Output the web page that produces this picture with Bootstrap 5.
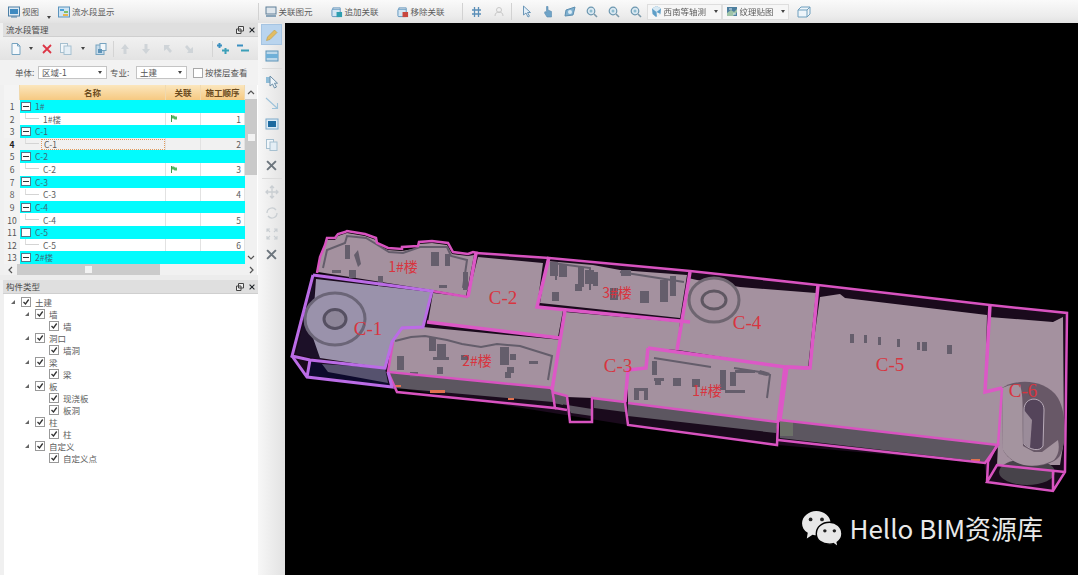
<!DOCTYPE html>
<html lang="zh-CN">
<head>
  <meta charset="UTF-8" />
  <title>流水段管理</title>
  <link href="https://cdn.jsdelivr.net/npm/bootstrap@5.3.3/dist/css/bootstrap.min.css" rel="stylesheet" />
  <style>
    html, body { height: 100%; overflow: hidden; background: #fff; }
    body { font: 8.5px/1 "Noto Sans CJK SC", "Liberation Sans", sans-serif; color: #5c5c5c; }
    .app-shell { width: 1078px; height: 575px; filter: blur(.45px); }

    /* top bar */
    .top-bar { height: 23px; flex: none; background: linear-gradient(#fafafa, #ececec 70%, #e2e2e2); }
    .top-bar svg { flex: none; }
    .tb-text { margin-left: 2px; white-space: nowrap; }
    .tb-sep { width: 1px; height: 17px; background: #d2d2d2; flex: none; }
    .tb-combo { height: 16px; background: #f6f6f6; border: 1px solid #dedede; padding: 0 3px; position: relative; }
    .combo-a { width: 75px; }
    .combo-b { width: 67px; }
    .combo-arrow { width: 0; height: 0; border: 2.5px solid transparent; border-top: 3px solid #444; border-bottom: 0; flex: none; }
    .ml5 { margin-left: 5px; } .ml6 { margin-left: 6px; } .ml7 { margin-left: 7px; } .ml8 { margin-left: 8px; }
    .ml9 { margin-left: 9px; } .ml10 { margin-left: 10px; } .ml11 { margin-left: 11px; } .ml12 { margin-left: 12px; }
    .ml17 { margin-left: 17px; } .ml18 { margin-left: 18px; } .ml143 { margin-left: 143px; }
    .arrow-mini { align-self: flex-end; margin-bottom: 4px; }

    /* left panels */
    .left-pane { width: 258px; flex: none; background: #f0f0f0; padding-left: 4px; }
    .pane-title { height: 14px; flex: none; background: #dfdfdf; border-bottom: 1px solid #cfcfcf; padding: 0 3px 0 3px; margin-left: -1px; color: #4a4a4a; }
    .pane-btns { gap: 5px; color: #444; }
    .pane-tools { height: 23px; flex: none; background: linear-gradient(#f1f1f1, #e3e3e3); margin-left: -4px; padding-left: 7px; }
    .slot { display: flex; justify-content: center; align-items: center; flex: none; }
    .s12 { width: 12px; } .s14 { width: 14px; } .s18 { width: 18px; } .s19 { width: 19px; } .s20 { width: 20px; } .s22 { width: 22px; }
    .pane-sep { width: 1px; height: 16px; background: #d4d4d4; margin: 0 1px; flex: none; }
    .filter-row { height: 25px; flex: none; color: #555; margin-left: -4px; background: #f2f2f2; }
    .filter-label { margin-left: 15px; width: 23px; }
    .filter-label-b { margin-left: 3px; width: 26px; }
    .fake-select { height: 13px; background: #fff; border: 1px solid #c4c4c4; padding: 0 4px 0 3px; }
    .sel-a { width: 69px; }
    .sel-b { width: 51px; }
    .check-wrap { margin-left: 6px; gap: 2px; }
    .plain-box { width: 10px; height: 10px; background: #fff; border: 1px solid #a8a8a8; }

    /* grid */
    .grid-box { height: 190px; flex: none; background: #fff; overflow: hidden; }
    .grid-main { width: 241px; height: 179px; flex: none; overflow: hidden; }
    .flow-table { table-layout: fixed; width: 241px; border-collapse: separate; border-spacing: 0; margin: 0; color: #5c5c5c; }
    .flow-table th, .flow-table td { padding: 0; border: 0; font-weight: 400; white-space: nowrap; box-shadow: none; vertical-align: middle; }
    .flow-table thead th { height: 15px; text-align: center; color: #6a4a1c; font-weight: 700; background: linear-gradient(#fbe6bd, #f6c981); border-right: 1px solid #f0d9ae; }
    .flow-table thead th:first-child { background: #f4f4f4; }
    .flow-table tbody td { height: 12.62px; border-right: 1px solid #e2e2e2; background: #fff; }
    .flow-table tbody td:first-child { background: #f3f3f3; text-align: center; color: #555; border-right: 0; }
    .flow-table tr.grp td:not(:first-child) { background: #02fbfd; border-color: #02fbfd; color: #3d6a78; }
    .flow-table tr.picked td { background: #f1f1f1; }
    .flow-table tr.picked td:first-child { font-weight: 700; color: #222; }
    .flow-table tr.picked .picked-name { border: 1px dotted #e09a5c; }
    .num-cell { text-align: right; padding-right: 3px !important; }
    .col-no { width: 16px; } .col-name { width: 146px; } .col-rel { width: 35px; } .col-order { width: 44px; }
    .name-cell { height: 11px; }
    .exp-box { width: 10px; height: 9px; margin: 0 4px 0 1px; background: #fff; border: 1px solid #54788c; flex: none; position: relative; }
    .exp-box.minus::after { content: ""; position: absolute; left: 1px; right: 1px; top: 3px; height: 1px; background: #333; }
    .tree-line { width: 14px; height: 6px; margin: 0 4px 6px 5px; border-left: 1px solid #ddd; border-bottom: 1px solid #d4d4d4; flex: none; }
    .picked-name { height: 11px; width: 126px; padding-left: 2px; margin-left: -2px; }
    .flag { margin-left: 5px; display: block; }

    .v-scroll { width: 12px; height: 179px; flex: none; background: #f1f1f1; }
    .v-arrow { height: 14px; flex: none; color: #555; }
    .v-track { height: 76px; flex: none; background: #c9c9c9; }
    .v-grip { width: 7px; height: 7px; background: #f2f2f2; }
    .h-scroll { height: 11px; flex: none; background: #f1f1f1; width: 253px; }
    .h-track { width: 143px; height: 100%; background: #cbcbcb; margin-left: 1px; }
    .h-grip { width: 7px; height: 7px; background: #f2f2f2; }
    .h-arrow { width: 12px; flex: none; }
    .pane-gap { height: 5px; flex: none; background: #ececec; margin-left: -4px; }

    /* tree */
    .type-tree { background: #fff; padding: 2px 0 0 0; margin: 0; list-style: none; flex-grow: 1; }
    .type-tree li { height: 12px; color: #5c5c5c; white-space: nowrap; }
    .caret { width: 0; height: 0; border-bottom: 4px solid #666; border-left: 4px solid transparent; flex: none; margin-right: 6px; }
    .chk { width: 10px; height: 10px; border: 1px solid #999; background: #fff; flex: none; margin-right: 4px; }
    .lvl0 { padding-left: 7px; } .lvl1 { padding-left: 21px; } .lvl2 { padding-left: 45px; }

    /* side rail */
    .tool-rail { width: 27px; flex: none; background: linear-gradient(90deg, #f7f7f7, #e2e2e2); padding-top: 1px; }
    .rail-btn { width: 21px; height: 21px; flex: none; }
    .rail-btn.on { background: #b9d4ee; border: 1px solid #a5c4e2; }
    .rail-sep { width: 20px; height: 1px; background: #dcdcdc; margin: 2px 0; flex: none; }

    /* model view */
    .view-port { background: #000; overflow: hidden; position: relative; }
    .view-port > svg { display: block; }
    .lbl { font-family: "Liberation Serif", "Noto Sans CJK SC", serif; font-size: 19px; fill: #d8353f; text-anchor: middle; }
    .lbl-cn { font-family: "Noto Sans CJK SC", serif; font-size: 14px; }
    .wm-mark { right: 35px; bottom: 28px; color: #e9e9e9; font-size: 26px; line-height: 1; gap: 7px; font-family: "Noto Sans CJK SC", "Noto Sans", sans-serif; white-space: nowrap; }
  </style>
</head>
<body>

<svg width="0" height="0" class="position-absolute">
  <symbol id="ic-view" viewBox="0 0 12 12"><rect x=".5" y="1" width="11" height="9" fill="#dfeaf3" stroke="#4d7fa5"/><rect x="2" y="3" width="8" height="5" fill="#3f8ac0"/><path d="M3 11h6" stroke="#4d7fa5"/></symbol>
  <symbol id="ic-flow" viewBox="0 0 12 12"><rect x=".5" y="1" width="11" height="10" fill="#cfe4f3" stroke="#5b93bd"/><rect x="2" y="3" width="4" height="2" fill="#4aa0d8"/><rect x="6" y="5" width="4" height="2" fill="#7cc06a"/><rect x="5" y="8" width="5" height="2" fill="#e9b64e"/></symbol>
  <symbol id="ic-rel" viewBox="0 0 12 12"><rect x="1" y="1" width="10" height="7" fill="#dfe6ec" stroke="#5f7f98"/><rect x="1" y="9" width="10" height="2" fill="#88a3b8"/></symbol>
  <symbol id="ic-add" viewBox="0 0 13 12"><path d="M2 4V1.500h8V4" fill="none" stroke="#6a9bc0"/><rect x="1" y="3" width="9" height="8" rx="1" fill="#d4e6f3" stroke="#5b93bd"/><rect x="6" y="6" width="6" height="5.500" fill="#2f9fb0"/></symbol>
  <symbol id="ic-del" viewBox="0 0 13 12"><path d="M2 4V1.500h8V4" fill="none" stroke="#6a9bc0"/><rect x="1" y="3" width="9" height="8" rx="1" fill="#d4e6f3" stroke="#5b93bd"/><rect x="6" y="6" width="6" height="5.500" fill="#c8473f"/></symbol>
  <symbol id="ic-hash" viewBox="0 0 11 12"><path d="M3.500 1v10M7.500 1v10M1 4h9M1 8h9" stroke="#5b8fb8" stroke-width="1.300" fill="none"/></symbol>
  <symbol id="ic-person" viewBox="0 0 11 12"><circle cx="5" cy="4" r="2.500" fill="none" stroke="#c8c8c8"/><path d="M1 10c0-3 2-4 4-4s4 1 4 4" fill="none" stroke="#c8c8c8"/></symbol>
  <symbol id="ic-cursor" viewBox="0 0 10 13"><path d="M1.500 1v9l2.500-2 2 4 1.500-.8-2-3.700H8.500z" fill="#e4eff8" stroke="#6c97b8"/></symbol>
  <symbol id="ic-hand" viewBox="0 0 10 13"><path d="M3.500 1.500v6L2 6.500 1.500 8 4 12h4.500V6.500L5 5V1.500z" fill="#6fa4c8" stroke="#5a8cb0" stroke-width=".6"/></symbol>
  <symbol id="ic-orbit" viewBox="0 0 14 12"><path d="M2 10l1-6 9-3-2 8z" fill="#7fb0d0" stroke="#5e8fb0"/><circle cx="7" cy="6" r="2" fill="#dcecf6"/></symbol>
  <symbol id="ic-zoom" viewBox="0 0 12 12"><circle cx="5" cy="5" r="3.800" fill="#dbe9f2" stroke="#6c97b0" stroke-width="1.200"/><path d="M8 8l3 3" stroke="#7d9aab" stroke-width="1.600"/><circle cx="5" cy="5" r="1.500" fill="#8ebdd0"/></symbol>
  <symbol id="ic-iso" viewBox="0 0 11 13"><path d="M5.500 1L10 3.500 9.500 9 5 12 1.500 9 1 3.500z" fill="#5f9fc8"/><path d="M5.500 1L10 3.500 5.500 7 1 3.500z" fill="#d8e9f3"/><path d="M5.500 7L6 12 9.500 9z" fill="#f2f2f2"/></symbol>
  <symbol id="ic-tex" viewBox="0 0 12 12"><rect x="1" y="1" width="10" height="9" fill="#4d7f9f"/><path d="M1 7l4-3 3 2 3-3v3l-4 4H1z" fill="#9fc4a8"/><path d="M3 3h3M7 8h3" stroke="#d8e8f2"/></symbol>
  <symbol id="ic-cube" viewBox="0 0 14 12"><path d="M1 4h9v7H1zM1 4l3-3h9l-3 3M10 11l3-3V1" fill="#eef5fa" stroke="#6f9fbe"/></symbol>
  <symbol id="ic-new" viewBox="0 0 10 12"><path d="M1 .5h5.500L9 3v8.500H1z" fill="#f4f8fb" stroke="#76a3c0"/><path d="M6.500.5V3H9" fill="none" stroke="#76a3c0"/></symbol>
  <symbol id="ic-x" viewBox="0 0 10 10"><path d="M1 1l8 8M9 1l-8 8" stroke="currentColor" stroke-width="1.800"/></symbol>
  <symbol id="ic-copy" viewBox="0 0 12 12"><rect x=".5" y=".5" width="7" height="9" fill="#f2f7fa" stroke="#a6c0d0"/><rect x="4" y="3" width="7" height="8.500" fill="#e4eef5" stroke="#a6c0d0"/></symbol>
  <symbol id="ic-paste" viewBox="0 0 12 12"><rect x="1" y="2" width="8" height="9.500" fill="#c6dbea" stroke="#76a3c0"/><rect x="5" y=".5" width="6" height="7" fill="#f2f7fa" stroke="#76a3c0"/><rect x="3" y="6" width="4" height="4" fill="#5e93b8"/></symbol>
  <symbol id="ic-up" viewBox="0 0 10 12"><path d="M5 1l4 5H6.500v5h-3V6H1z" fill="#cfd4d8"/></symbol>
  <symbol id="ic-down" viewBox="0 0 10 12"><path d="M5 11L1 6h2.500V1h3v5H9z" fill="#cfd4d8"/></symbol>
  <symbol id="ic-ul" viewBox="0 0 10 10"><path d="M1 1h6L5.500 3 9 7 7 9 3.500 5 1 7z" fill="#cfd4d8"/></symbol>
  <symbol id="ic-dr" viewBox="0 0 10 10"><path d="M9 9H3l1.500-2L1 3l2-2 3.500 4L9 3z" fill="#cfd4d8"/></symbol>
  <symbol id="ic-plus" viewBox="0 0 12 11"><path d="M0 2.500h5M2.500 0v5" stroke="#3b8fc0" stroke-width="2"/><path d="M5 7.500h7M8.500 5v6" stroke="#3b9fb8" stroke-width="2"/></symbol>
  <symbol id="ic-minus" viewBox="0 0 12 11"><path d="M0 2.500h6" stroke="#3b8fc0" stroke-width="2"/><path d="M4 7.500h8" stroke="#3b9fb8" stroke-width="2"/></symbol>
  <symbol id="ic-flag" viewBox="0 0 6 7"><path d="M.5 0v7" stroke="#3d9a4a"/><path d="M1 .5h2l1 1h2v3H3.500l-1-1H1z" fill="#55b562"/></symbol>
  <symbol id="ic-check" viewBox="0 0 8 8"><path d="M1.500 4l2 2 3.200-4.500" fill="none" stroke="#333" stroke-width="1.300"/></symbol>
  <symbol id="ic-float" viewBox="0 0 8 8"><path d="M2.500 .5h5v4.500h-5zM.5 3h4.500v4.500H.5z" fill="#eee" stroke="#444"/></symbol>
  <symbol id="ic-pencil" viewBox="0 0 14 14"><path d="M1.500 12.500l1-3.500 7-7 2.500 2.500-7 7z" fill="#e3bd62" stroke="#b99a4e" stroke-width=".6"/></symbol>
  <symbol id="ic-box" viewBox="0 0 14 14"><rect x="1" y="2" width="12" height="10" fill="#bcd8ea" stroke="#5c93b8"/><rect x="1" y="5" width="12" height="4" fill="#6fb0d8"/></symbol>
  <symbol id="ic-arrowsel" viewBox="0 0 14 14"><path d="M1 2h5v6H1z" fill="#8fbdd8"/><path d="M5 1l0 10 2.500-2 2 4 2-1-2-3.800H12.500z" fill="#eef5fa" stroke="#6c8fa8"/></symbol>
  <symbol id="ic-line" viewBox="0 0 14 14"><path d="M1 2l11 10M12.500 7v5.500H7" fill="none" stroke="#9ec3da" stroke-width="1.100"/></symbol>
  <symbol id="ic-solid" viewBox="0 0 14 14"><rect x="1" y="2" width="12" height="10" fill="#dcebf5" stroke="#7daaca"/><rect x="3" y="4" width="8" height="6" fill="#1d6a9f"/></symbol>
  <symbol id="ic-move" viewBox="0 0 14 14"><path d="M7 1v12M1 7h12M5 3l2-2 2 2M5 11l2 2 2-2M3 5L1 7l2 2M11 5l2 2-2 2" fill="none" stroke="#c9ced2" stroke-width="1.300"/></symbol>
  <symbol id="ic-rot" viewBox="0 0 14 14"><path d="M2 7a5 5 0 0 1 9-3M12 7a5 5 0 0 1-9 3" fill="none" stroke="#c9ced2" stroke-width="1.300"/></symbol>
  <symbol id="ic-scale" viewBox="0 0 14 14"><path d="M2 2l3 3M12 2L9 5M2 12l3-3M12 12L9 9M2 5V2h3M9 2h3v3M2 9v3h3M12 9v3H9" fill="none" stroke="#c9ced2" stroke-width="1.100"/></symbol>
  <symbol id="ic-chev-up" viewBox="0 0 8 5"><path d="M1 4l3-3 3 3" fill="none" stroke="#555" stroke-width="1.200"/></symbol>
  <symbol id="ic-chev-down" viewBox="0 0 8 5"><path d="M1 1l3 3 3-3" fill="none" stroke="#555" stroke-width="1.200"/></symbol>
  <symbol id="ic-chev-left" viewBox="0 0 5 8"><path d="M4 1L1 4l3 3" fill="none" stroke="#555" stroke-width="1.200"/></symbol>
  <symbol id="ic-chev-right" viewBox="0 0 5 8"><path d="M1 1l3 3-3 3" fill="none" stroke="#555" stroke-width="1.200"/></symbol>
</svg>

<div class="app-shell d-flex flex-column">

  <div class="top-bar d-flex align-items-center">
    <svg class="ml8" width="12" height="12"><use href="#ic-view"/></svg><span class="tb-text">视图</span>
    <span class="combo-arrow arrow-mini ml8"></span>
    <svg class="ml7" width="12" height="12"><use href="#ic-flow"/></svg><span class="tb-text">流水段显示</span>
    <span class="tb-sep ml143"></span>
    <svg class="ml6" width="12" height="12"><use href="#ic-rel"/></svg><span class="tb-text">关联图元</span>
    <svg class="ml18" width="12" height="12"><use href="#ic-add"/></svg><span class="tb-text">追加关联</span>
    <svg class="ml18" width="12" height="12"><use href="#ic-del"/></svg><span class="tb-text">移除关联</span>
    <span class="tb-sep ml17"></span>
    <svg class="ml8" width="11" height="12"><use href="#ic-hash"/></svg>
    <svg class="ml12" width="11" height="12"><use href="#ic-person"/></svg>
    <span class="tb-sep ml6"></span>
    <svg class="ml10" width="10" height="13"><use href="#ic-cursor"/></svg>
    <svg class="ml11" width="10" height="13"><use href="#ic-hand"/></svg>
    <svg class="ml10" width="14" height="12"><use href="#ic-orbit"/></svg>
    <svg class="ml9" width="12" height="12"><use href="#ic-zoom"/></svg>
    <svg class="ml10" width="12" height="12"><use href="#ic-zoom"/></svg>
    <svg class="ml10" width="12" height="12"><use href="#ic-zoom"/></svg>
    <div class="tb-combo combo-a d-flex align-items-center justify-content-between ml5">
      <span class="d-flex align-items-center"><svg width="11" height="13"><use href="#ic-iso"/></svg><span class="tb-text">西南等轴测</span></span><span class="combo-arrow"></span>
    </div>
    <div class="tb-combo combo-b d-flex align-items-center justify-content-between">
      <span class="d-flex align-items-center"><svg width="12" height="12"><use href="#ic-tex"/></svg><span class="tb-text">纹理贴图</span></span><span class="combo-arrow"></span>
    </div>
    <svg class="ml8" width="14" height="12"><use href="#ic-cube"/></svg>
  </div>

  <div class="d-flex flex-grow-1">
    <aside class="left-pane d-flex flex-column">
      <div class="pane-title d-flex align-items-center justify-content-between">
        <span>流水段管理</span>
        <span class="pane-btns d-flex align-items-center"><svg width="8" height="8"><use href="#ic-float"/></svg><svg width="6" height="6" class="text-dark"><use href="#ic-x"/></svg></span>
      </div>
      <div class="pane-tools d-flex align-items-center">
        <span class="slot s18"><svg width="10" height="12"><use href="#ic-new"/></svg></span>
        <span class="slot s12"><span class="combo-arrow"></span></span>
        <span class="slot s19 text-danger"><svg width="10" height="10"><use href="#ic-x"/></svg></span>
        <span class="slot s20"><svg width="12" height="12"><use href="#ic-copy"/></svg></span>
        <span class="slot s14"><span class="combo-arrow"></span></span>
        <span class="slot s22"><svg width="12" height="12"><use href="#ic-paste"/></svg></span>
        <span class="pane-sep"></span>
        <span class="slot s20"><svg width="10" height="12"><use href="#ic-up"/></svg></span>
        <span class="slot s22"><svg width="10" height="12"><use href="#ic-down"/></svg></span>
        <span class="slot s22"><svg width="10" height="10"><use href="#ic-ul"/></svg></span>
        <span class="slot s20"><svg width="10" height="10"><use href="#ic-dr"/></svg></span>
        <span class="slot s12"></span>
        <span class="pane-sep"></span>
        <span class="slot s18"><svg width="12" height="11"><use href="#ic-plus"/></svg></span>
        <span class="slot s22"><svg width="12" height="11"><use href="#ic-minus"/></svg></span>
      </div>
      <div class="filter-row d-flex align-items-center">
        <span class="filter-label">单体:</span>
        <span class="fake-select sel-a d-flex align-items-center justify-content-between"><span>区域-1</span><span class="combo-arrow"></span></span>
        <span class="filter-label-b">专业:</span>
        <span class="fake-select sel-b d-flex align-items-center justify-content-between"><span>土建</span><span class="combo-arrow"></span></span>
        <span class="check-wrap d-flex align-items-center"><span class="plain-box"></span><span>按楼层查看</span></span>
      </div>
      <div class="grid-box">
        <div class="d-flex">
          <div class="grid-main">
            <table class="table flow-table">
              <colgroup><col class="col-no"><col class="col-name"><col class="col-rel"><col class="col-order"></colgroup>
              <thead><tr><th></th><th>名称</th><th>关联</th><th>施工顺序</th></tr></thead>
              <tbody>
                <tr class="grp"><td>1</td><td><div class="name-cell d-flex align-items-center"><i class="exp-box minus"></i>1#</div></td><td></td><td></td></tr>
                <tr><td>2</td><td><div class="name-cell d-flex align-items-center"><i class="tree-line"></i>1#楼</div></td><td><svg class="flag" width="6" height="7"><use href="#ic-flag"/></svg></td><td class="num-cell">1</td></tr>
                <tr class="grp"><td>3</td><td><div class="name-cell d-flex align-items-center"><i class="exp-box minus"></i>C-1</div></td><td></td><td></td></tr>
                <tr class="picked"><td>4</td><td><div class="name-cell d-flex align-items-center"><i class="tree-line"></i><span class="picked-name d-flex align-items-center">C-1</span></div></td><td></td><td class="num-cell">2</td></tr>
                <tr class="grp"><td>5</td><td><div class="name-cell d-flex align-items-center"><i class="exp-box minus"></i>C-2</div></td><td></td><td></td></tr>
                <tr><td>6</td><td><div class="name-cell d-flex align-items-center"><i class="tree-line"></i>C-2</div></td><td><svg class="flag" width="6" height="7"><use href="#ic-flag"/></svg></td><td class="num-cell">3</td></tr>
                <tr class="grp"><td>7</td><td><div class="name-cell d-flex align-items-center"><i class="exp-box minus"></i>C-3</div></td><td></td><td></td></tr>
                <tr><td>8</td><td><div class="name-cell d-flex align-items-center"><i class="tree-line"></i>C-3</div></td><td></td><td class="num-cell">4</td></tr>
                <tr class="grp"><td>9</td><td><div class="name-cell d-flex align-items-center"><i class="exp-box minus"></i>C-4</div></td><td></td><td></td></tr>
                <tr><td>10</td><td><div class="name-cell d-flex align-items-center"><i class="tree-line"></i>C-4</div></td><td></td><td class="num-cell">5</td></tr>
                <tr class="grp"><td>11</td><td><div class="name-cell d-flex align-items-center"><i class="exp-box"></i>C-5</div></td><td></td><td></td></tr>
                <tr><td>12</td><td><div class="name-cell d-flex align-items-center"><i class="tree-line"></i>C-5</div></td><td></td><td class="num-cell">6</td></tr>
                <tr class="grp"><td>13</td><td><div class="name-cell d-flex align-items-center"><i class="exp-box minus"></i>2#楼</div></td><td></td><td></td></tr>
              </tbody>
            </table>
          </div>
          <div class="v-scroll d-flex flex-column">
            <span class="v-arrow d-flex align-items-center justify-content-center"><svg width="8" height="5"><use href="#ic-chev-up"/></svg></span>
            <span class="v-track d-flex align-items-center justify-content-center"><i class="v-grip"></i></span>
            <span class="flex-grow-1"></span>
            <span class="v-arrow d-flex align-items-center justify-content-center"><svg width="8" height="5"><use href="#ic-chev-down"/></svg></span>
          </div>
        </div>
        <div class="h-scroll d-flex align-items-center">
          <span class="h-arrow d-flex justify-content-center"><svg width="5" height="8"><use href="#ic-chev-left"/></svg></span>
          <span class="h-track d-flex align-items-center justify-content-center"><i class="h-grip"></i></span>
          <span class="flex-grow-1"></span>
          <span class="h-arrow d-flex justify-content-center"><svg width="5" height="8"><use href="#ic-chev-right"/></svg></span>
        </div>
      </div>
      <div class="pane-gap"></div>
      <div class="pane-title d-flex align-items-center justify-content-between">
        <span>构件类型</span>
        <span class="pane-btns d-flex align-items-center"><svg width="8" height="8"><use href="#ic-float"/></svg><svg width="6" height="6" class="text-dark"><use href="#ic-x"/></svg></span>
      </div>
      <ul class="type-tree">
        <li class="lvl0 d-flex align-items-center"><i class="caret"></i><span class="chk d-flex"><svg width="8" height="8"><use href="#ic-check"/></svg></span>土建</li>
        <li class="lvl1 d-flex align-items-center"><i class="caret"></i><span class="chk d-flex"><svg width="8" height="8"><use href="#ic-check"/></svg></span>墙</li>
        <li class="lvl2 d-flex align-items-center"><span class="chk d-flex"><svg width="8" height="8"><use href="#ic-check"/></svg></span>墙</li>
        <li class="lvl1 d-flex align-items-center"><i class="caret"></i><span class="chk d-flex"><svg width="8" height="8"><use href="#ic-check"/></svg></span>洞口</li>
        <li class="lvl2 d-flex align-items-center"><span class="chk d-flex"><svg width="8" height="8"><use href="#ic-check"/></svg></span>墙洞</li>
        <li class="lvl1 d-flex align-items-center"><i class="caret"></i><span class="chk d-flex"><svg width="8" height="8"><use href="#ic-check"/></svg></span>梁</li>
        <li class="lvl2 d-flex align-items-center"><span class="chk d-flex"><svg width="8" height="8"><use href="#ic-check"/></svg></span>梁</li>
        <li class="lvl1 d-flex align-items-center"><i class="caret"></i><span class="chk d-flex"><svg width="8" height="8"><use href="#ic-check"/></svg></span>板</li>
        <li class="lvl2 d-flex align-items-center"><span class="chk d-flex"><svg width="8" height="8"><use href="#ic-check"/></svg></span>现浇板</li>
        <li class="lvl2 d-flex align-items-center"><span class="chk d-flex"><svg width="8" height="8"><use href="#ic-check"/></svg></span>板洞</li>
        <li class="lvl1 d-flex align-items-center"><i class="caret"></i><span class="chk d-flex"><svg width="8" height="8"><use href="#ic-check"/></svg></span>柱</li>
        <li class="lvl2 d-flex align-items-center"><span class="chk d-flex"><svg width="8" height="8"><use href="#ic-check"/></svg></span>柱</li>
        <li class="lvl1 d-flex align-items-center"><i class="caret"></i><span class="chk d-flex"><svg width="8" height="8"><use href="#ic-check"/></svg></span>自定义</li>
        <li class="lvl2 d-flex align-items-center"><span class="chk d-flex"><svg width="8" height="8"><use href="#ic-check"/></svg></span>自定义点</li>
      </ul>
    </aside>

    <div class="tool-rail d-flex flex-column align-items-center">
      <span class="rail-btn on d-flex align-items-center justify-content-center"><svg width="14" height="14"><use href="#ic-pencil"/></svg></span>
      <span class="rail-btn d-flex align-items-center justify-content-center"><svg width="14" height="14"><use href="#ic-box"/></svg></span>
      <span class="rail-sep"></span>
      <span class="rail-btn d-flex align-items-center justify-content-center"><svg width="14" height="14"><use href="#ic-arrowsel"/></svg></span>
      <span class="rail-btn d-flex align-items-center justify-content-center"><svg width="14" height="14"><use href="#ic-line"/></svg></span>
      <span class="rail-btn d-flex align-items-center justify-content-center"><svg width="14" height="14"><use href="#ic-solid"/></svg></span>
      <span class="rail-btn d-flex align-items-center justify-content-center"><svg width="12" height="12"><use href="#ic-copy"/></svg></span>
      <span class="rail-btn d-flex align-items-center justify-content-center text-secondary"><svg width="11" height="11"><use href="#ic-x"/></svg></span>
      <span class="rail-sep"></span>
      <span class="rail-btn d-flex align-items-center justify-content-center"><svg width="14" height="14"><use href="#ic-move"/></svg></span>
      <span class="rail-btn d-flex align-items-center justify-content-center"><svg width="14" height="14"><use href="#ic-rot"/></svg></span>
      <span class="rail-btn d-flex align-items-center justify-content-center"><svg width="14" height="14"><use href="#ic-scale"/></svg></span>
      <span class="rail-btn d-flex align-items-center justify-content-center text-secondary"><svg width="11" height="11"><use href="#ic-x"/></svg></span>
    </div>

    <div class="view-port flex-grow-1">
      <svg width="793" height="552" viewBox="285 23 793 552">
        <!-- dark under-layer -->
        <path d="M478 253L690 271 990 305 1067 313 1065 472 1053 491 987 482 984 463 778 445 628 425 392 387 307 377 292 356 313 275z" fill="#1a0a1c"/>
        <path d="M307 377L310 360 322 364 385 368 388 383 392 387z" fill="#0d0a2c"/>
        <path d="M322 364L385 368 388 383 328 372z" fill="#56526e"/>
        <path d="M296 354L313 282 322 360z" fill="#1c1028"/>

        <!-- lower walls -->
        <g fill="#5c5660">
          <path d="M388 372L552 388 553 402 395 388z"/>
          <path d="M553 393L567 397 567 405 553 403z"/>
          <path d="M567 405L592 409 592 416 571 413z"/>
          <path d="M594 398L625 402 625 412 594 408z"/>
          <path d="M628 403L778 422 776 433 628 416z"/>
          <path d="M780 420L998 445 985 462 780 438z"/>
          <path d="M555 390L563 392 563 405 555 403z"/>
        </g>
        <path d="M780 420L793 422 793 436 780 436z" fill="#6c7068"/>
        <g fill="#e0704f">
          <path d="M394 385h7v2h-7zM430 390h15v3h-15zM508 398h6v2h-6zM649 400h6v2h-6zM670 405h9v2h-9zM722 410h6v3h-6zM971 459h9v2h-9z"/>
        </g>

        <!-- slabs -->
        <g fill="#a4919f">
          <path d="M318 272L320 257 325 245 327 240 335 240 338 236 347 233 365 236 376 240 377 245 388 250 402 251 418 248 419 244 432 243 447 245 452 254 468 256 474 255 466 296 432 290z"/>
          <path d="M478 257L543 263 537 307 563 310 558 337 428 322 433 293 468 297z"/>
          <path d="M547 261L593 265 620 270 687 275 680 318 540 303z"/>
          <path d="M565 312L680 322 677 350 648 348 646 368 628 370 625 402 592 398 567 397 552 392z"/>
          <path d="M402 328L423 327 562 340 552 388 388 372 393 342z"/>
          <path d="M697 280L740 287 816 293 808 368 785 367 678 350 688 278z"/>
          <path d="M648 348L785 367 778 422 628 403 628 370 646 368z"/>
          <path d="M820 297L840 294 845 298 987 315 985 392 1002 388 998 445 780 420 787 367 810 368z"/>
          <path d="M989 317L1053 322 1063 317 1064 440 1060 465 997 465 998 445 1002 388 985 392z"/>
        </g>
        <path d="M316 279L431 292 423 327 402 328 392 342 385 368 320 358 312 335z" fill="#9a92ab"/>

        <!-- rings -->
        <ellipse cx="335" cy="319" rx="30" ry="26" fill="#9a92ab" stroke="#6b6577" stroke-width="3"/>
        <ellipse cx="335" cy="319" rx="11" ry="9.500" fill="#8e8699" stroke="#565062" stroke-width="3"/>
        <ellipse cx="714" cy="300" rx="25" ry="22" fill="#a4919f" stroke="#6e6570" stroke-width="3"/>
        <ellipse cx="714" cy="300" rx="12" ry="9" fill="#a4919f" stroke="#5f5762" stroke-width="3"/>

        <!-- building details -->
        <g fill="none" stroke="#645d6b" stroke-width="2">
          <path d="M323 268L327 250 345 243 347 236 366 238 376 244 389 252 403 253 420 247 447 247 451 256 467 260 463 288"/>
          <path d="M395 341L411 337 425 336 447 340 462 344 481 347 497 344 520 346 552 356 548 380"/>
          <path d="M553 263L590 268 590 290M620 272L684 282M556 262L556 280"/>
          <path d="M654 358L692 364 711 367M734 368L760 372 770 375 767 398"/>
        </g>
        <g fill="#655e6c">
          <path d="M345 245h5v14h-5zM358 250l3 14-3 3-4-12zM431 252h8v14h-8zM445 254h5v12h-5zM349 270h7v8h-7zM378 276h5v10h-5zM439 285h8v3h-8zM463 272h5v18h-5zM332 270h9v3h-9z"/>
          <path d="M397 356h7v14h-7zM429 337h7v14h-7zM437 344h9v16h-9zM433 357h16v3h-16zM437 367h6v7h-6zM461 355h8v5h-8zM500 347h9v18h-9zM510 354h6v6h-6zM507 367h7v6h-7zM505 372h6v6h-6zM529 361h9v3h-9zM410 372h8v5h-8z"/>
          <path d="M550 262h8v14h-8zM559 265h8v12h-8zM578 267h6v20h-6zM585 270h9v14h-9zM593 272h5v14h-5zM552 292h7v9h-7zM575 284h7v7h-7zM610 288h8v12h-8zM640 291h9v12h-9zM660 280h8v22h-8zM670 276h6v20h-6zM621 270h10v6h-10z"/>
          <path d="M652 361h5v14h-5zM654 378h10v3h-10zM634 388h14v3h-14zM634 390h5v10h-5zM644 388h4v12h-4zM655 380h6v5h-6zM673 378h8v8h-8zM692 379h8v8h-8zM720 370h6v20h-6zM730 372h6v14h-6zM735 370h20v3h-20zM725 390h20v3h-20zM760 370l10 3-3 3-9-2z"/>
          <path d="M850 334h4v9h-4zM864 335h3v8h-3zM878 337h3v8h-3zM897 339h3v8h-3zM917 342h3v8h-3zM922 342h5v9h-5zM947 345h5v9h-5z"/>
        </g>

        <!-- core at C-6 -->
        <ellipse cx="1027" cy="472" rx="28" ry="13" fill="#47434a"/>
        <path d="M1002 388C1015 379 1045 378 1058 398 1068 415 1066 450 1058 458 1048 468 1015 472 1003 450z" fill="#685867"/>
        <path d="M1002 388C1008 385 1014 384 1020 385 1024 398 1022 410 1023 446L1034 452 1042 452 1058 440C1060 450 1058 455 1054 460 1040 468 1015 470 1003 450z" fill="#a4949f"/>
        <path d="M1024 410C1024 395 1044 396 1044 410L1043 446C1040 452 1030 450 1024 444z" fill="#54445a" stroke="#cfc3cf" stroke-width=".8"/>
        <path d="M1024 410L1024 444 1030 448 1032 420z" fill="#9b8c9a"/>

        <!-- pink edges -->
        <g fill="none" stroke="#d853c0" stroke-width="2.500">
          <path d="M317 273L320 257 325 245 327 238 335 238 338 234 345 232 347 231 365 234 376 238 377 243 388 248 402 249 402 247 418 246 419 242 432 241 448 243 453 252 468 254 473 252 478 253"/>
          <path d="M476 253L549 258 690 271 818 285 990 305 1067 313 1065 472 1053 491 987 482 997 465 1065 472M987 482L988 462 997 445M1053 470L1053 491"/>
          <path d="M432 291L468 297"/>
          <path d="M393 342L388 372 552 388 555 408 397 392 388 372"/>
          <path d="M402 328L423 327"/>
          <path d="M552 392L567 396 570 422 592 422 592 398 625 402 628 425 777 445 778 422 628 403"/>
          <path d="M555 408L567 410"/>
          <path d="M780 420L998 445 985 463 778 440"/>
        </g>
        <g fill="none" stroke="#dc58c6" stroke-width="3.500">
          <path d="M476 253L468 297"/>
          <path d="M549 257L537 307 690 322"/>
          <path d="M427 322L560 338"/>
          <path d="M565 310L552 390"/>
          <path d="M690 272L677 350"/>
          <path d="M648 348L785 367 808 368"/>
          <path d="M648 348L646 368 628 370 625 402"/>
          <path d="M785 367L778 422"/>
          <path d="M818 285L810 368 787 367 780 420"/>
          <path d="M990 305L985 392 1002 388"/>
          <path d="M1002 388L998 445" stroke-width="2.500"/>
        </g>
        <g fill="none" stroke="#bb6ce6" stroke-width="3">
          <path d="M313 275L432 291 423 327 402 328 392 342 385 368 310 360 292 356 313 275"/>
          <path d="M292 356L307 377 392 387 388 372M310 360L307 377"/>
        </g>

        <!-- labels -->
        <text class="lbl" x="368" y="335">C-1</text>
        <text class="lbl" x="503" y="304">C-2</text>
        <text class="lbl" x="618" y="372">C-3</text>
        <text class="lbl" x="747" y="329">C-4</text>
        <text class="lbl" x="890" y="371">C-5</text>
        <text class="lbl" x="1023" y="397">C-6</text>
        <text class="lbl lbl-cn" x="403" y="272">1#楼</text>
        <text class="lbl lbl-cn" x="477" y="366">2#楼</text>
        <text class="lbl lbl-cn" x="617" y="298">3#楼</text>
        <text class="lbl lbl-cn" x="707" y="396">1#楼</text>
      </svg>
      <div class="wm-mark position-absolute d-flex align-items-center">
        <svg width="42" height="38" viewBox="0 0 44 40">
          <path d="M16 2C8 2 1 8 1 15c0 4 2 8 6 10l-1 6 6-4c2 .5 3 .5 5 .5 8 0 14-6 14-13S24 2 16 2z" fill="#e8e8e8"/>
          <circle cx="10" cy="11" r="2" fill="#222"/><circle cx="22" cy="11" r="2" fill="#222"/>
          <path d="M30 14c-8 0-14 5-14 12s6 11 14 11c1.500 0 3 0 4-.5l5 3.500-1-5c3-2 5-5 5-9 0-7-6-12-13-12z" fill="#e8e8e8" stroke="#000" stroke-width="1.500"/>
          <circle cx="25" cy="23" r="1.800" fill="#222"/><circle cx="35" cy="23" r="1.800" fill="#222"/>
        </svg>
        <span>Hello BIM资源库</span>
      </div>
    </div>
  </div>
</div>

</body>
</html>
